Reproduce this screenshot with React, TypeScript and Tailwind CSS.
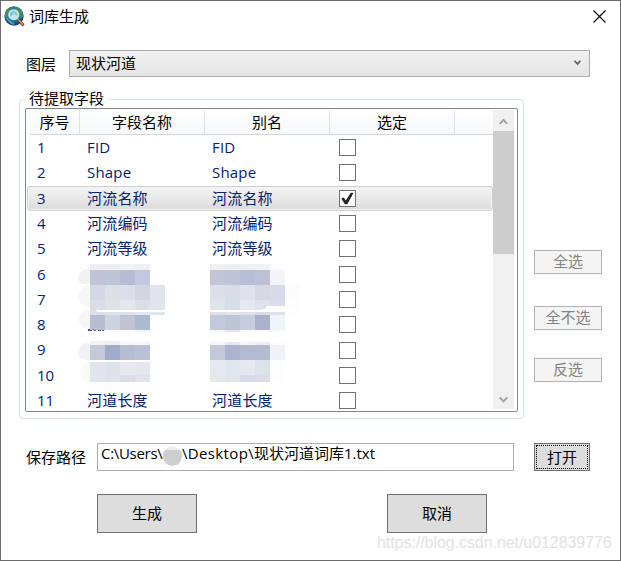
import React from 'react';

type Row = { id: number; name: string; alias: string; checked?: boolean };

const rows: Row[] = [
  { id: 1, name: 'FID', alias: 'FID' },
  { id: 2, name: 'Shape', alias: 'Shape' },
  { id: 3, name: '河流名称', alias: '河流名称', checked: true },
  { id: 4, name: '河流编码', alias: '河流编码' },
  { id: 5, name: '河流等级', alias: '河流等级' },
  { id: 6, name: '', alias: '' },
  { id: 7, name: '', alias: '' },
  { id: 8, name: '', alias: '' },
  { id: 9, name: '', alias: '' },
  { id: 10, name: '', alias: '' },
  { id: 11, name: '河道长度', alias: '河道长度' },
];

// Each band: top, height, then one colour per 15px block.
type Band = [number, number, string[]];

const nameBands: Band[] = [
  [0, 6, ['#eeeef3', '#ebedf3', '#f2f1f4', '#eff0f6']],
  [6, 15, ['#c2c3d6', '#bfc4d8', '#b9bdd3', '#c3c8de']],
  [21, 15, ['#d5d8e4', '#dddfe8', '#dcdfe9', '#d3d5e1', '#e0e4ed']],
  [36, 10, ['#d8dde7', '#dfe1e7', '#e4e6ee', '#dbdee6', '#e0e4ed']],
  [48, 3, ['#dce1e7', '#dfe2e8', '#dde0e9', '#e0e5ee', '#e0e4ed']],
  [51, 15, ['#b8bed1', '#ced3e2', '#c1c3d5', '#abb9d1']],
  [66, 2, ['#ffffff', '#fbfbfd', '#fcfcfd', '#f5f6f8']],
  [77, 4, ['#f3f3f6', '#eeeff5', '#f7f7f9', '#f7f8f9']],
  [81, 15, ['#c4c9d8', '#a2abc9', '#b7bdd0', '#b9c2d5']],
  [98, 13, ['#e1e4ed', '#dde1e9', '#eae8ef', '#e4e7f0']],
  [111, 7, ['#e1e5ec', '#dfe2ea', '#dadde8', '#dfe1eb']],
];

const aliasBands: Band[] = [
  [0, 6, ['#efeff4', '#eceef3', '#eef0f4', '#f0f1f6', '#fcfcfe']],
  [6, 15, ['#c3c4d7', '#c0c4d9', '#b8bfd5', '#bdc1d7', '#f3f4fa']],
  [21, 15, ['#dcdee8', '#d9dde8', '#dfe2ec', '#d6d8e4', '#d7dbe7', '#fcfcfe']],
  [36, 10, ['#dfe3ea', '#d8ddea', '#e6e8f1', '#dfe2ea', '#d9dde9', '#fdfdfe']],
  [48, 3, ['#dde0e5', '#e0e3e9', '#dfe2ea', '#d9dbe5', '#dce1e9', '#fdfdfe']],
  [51, 15, ['#c2c9db', '#bdc4d6', '#c7cddf', '#abb1cc', '#eef4fa']],
  [66, 2, ['#f6f7f9', '#e4e7f0', '#fafafc', '#fcfcfd', '#fafafc']],
  [78, 3, ['#f4f5f8', '#e7e9f2', '#f5f5f8', '#eceef4', '#fcfcfd']],
  [81, 15, ['#c5c8d8', '#adb4d0', '#b1bacf', '#b2bbd0', '#f1f2f9']],
  [96, 15, ['#e7e8ef', '#e0e6ee', '#e7e7f2', '#dde1ea', '#fdfdfe']],
  [111, 7, ['#e5e7ec', '#dfe3ea', '#d7daea', '#dadde8', '#fdfdfe']],
];

function Mosaic({ bands, blobs }: { bands: Band[]; blobs?: boolean }) {
  return (
    <svg width="104" height="121" viewBox="-12 0 104 121" shapeRendering="crispEdges" aria-hidden="true">
      {blobs && (
        <g shapeRendering="auto">
          <path d="M0 5H-4Q-12 8-12 14T-4 20H0Z" fill="#f2f2f5" />
          <path d="M0 21H-3Q-12 26-12 33T-2 43L0 44Z" fill="#f7f7f8" />
          <path d="M0 46H-5Q-11 50-11 56T-2 66H0Z" fill="#f5f5f7" />
          <path d="M0 79H-5Q-12 83-12 89T-3 96H0Z" fill="#f0f0f5" />
          <path d="M0 98H-3Q-10 103-10 110T0 120H8V118H0Z" fill="#f9f9fa" />
        </g>
      )}
      {bands.map(([y, h, colors]) =>
        colors.map((c, i) => <rect key={`${y}-${i}`} x={i * 15} y={y} width="15" height={h} fill={c} />),
      )}
      {blobs && <path d="M0 46h5l2 2H0z" fill="#dce1e7" />}
      {blobs && <path d="M-2 65.5h2M3 65.5h1M-2 66.5h4M4 66.5h2M8 66.5h3M12 66.5h2" stroke="#45548d" />}
      {!blobs && <path d="M57 42h18v5H52v-2h3z" fill="#fff" />}
    </svg>
  );
}

function GlobeIcon() {
  return (
    <svg width="21" height="21" viewBox="0 0 21 21" aria-hidden="true">
      <defs>
        <radialGradient id="globe" cx="45%" cy="40%" r="60%">
          <stop offset="0" stopColor="#45b5dc" />
          <stop offset=".65" stopColor="#176c9e" />
          <stop offset="1" stopColor="#123a5c" />
        </radialGradient>
      </defs>
      <circle cx="10" cy="10" r="9.7" fill="url(#globe)" />
      <path d="M1 6Q4 1 8 1L7 4 4 6 5 9 3 12 1 11ZM11 1q5 0 7 5l1 5-3 1-2-4-3-3ZM5 15l4 1 1 3-3-1Z" fill="#418f62" />
      <path d="M3 12Q5 16 10 18" stroke="#4ab7df" strokeWidth="1.2" fill="none" />
      <circle cx="9.7" cy="8.7" r="4.8" fill="#bde8f4" stroke="#d5e2e6" strokeWidth="1.4" />
      <path d="M6 8q1-3 4-3l2 1-3 2-2 3Z" fill="#7cc5df" />
      <path d="M10 6l3 1 .5 3-2-1Z" fill="#8dca8c" />
      <path d="M13 12.5l2 2" stroke="#e6eaec" strokeWidth="1.8" />
      <path d="M14.6 14.1l4.2 4.4" stroke="#713f2a" strokeWidth="3" strokeLinecap="round" />
      <path d="M14.8 14l3.9 4.2" stroke="#d98a59" strokeWidth="1.6" strokeLinecap="round" />
    </svg>
  );
}

function CheckBox({ checked }: { checked?: boolean }) {
  return (
    <span className="flex h-[17px] w-[17px] items-center justify-center border border-[#707070] bg-white">
      {checked && (
        <svg width="15" height="15" viewBox="0 0 15 15" aria-hidden="true">
          <path d="M1.3 7.4 3.8 6.5 5.8 9.4 10.8 1.8 13.4 2 7.3 13.2H4.9Z" fill="#212121" />
        </svg>
      )}
    </span>
  );
}

function SideButton({ label, className }: { label: string; className: string }) {
  return (
    <button
      className={`flex h-[24px] w-[68px] items-center justify-center border border-[#adb2b5] bg-[#f4f4f4] pb-[2px] text-[#838383] ${className}`}
    >
      {label}
    </button>
  );
}

export default function App() {
  return (
    <main className="relative flex h-[561px] w-[621px] flex-col overflow-hidden border border-[#6b6b6b] bg-white font-['Open_Sans','Noto_Sans_CJK_SC',sans-serif] text-[15px] leading-[20px] text-black">
      <header className="flex h-[30px] shrink-0 items-center pr-[14px] pl-[3px]">
        <GlobeIcon />
        <h1 className="ml-[4px]">词库生成</h1>
        <button className="ml-auto" aria-label="关闭">
          <svg width="13" height="13" viewBox="0 0 13 13" className="block">
            <path d="M.5.5l12 12M12.5.5l-12 12" stroke="#000" strokeWidth="1.1" />
          </svg>
        </button>
      </header>

      <section className="mt-[19px] flex h-[27px] shrink-0 items-center pl-[25px]">
        <span className="w-[43px]">图层</span>
        <div className="flex h-[27px] w-[521px] items-center justify-between border border-[#acacac] bg-linear-to-b from-[#f0f0f0] to-[#e5e5e5] pr-[8px] pl-[6px]">
          <span className="mb-[2px]">现状河道</span>
          <svg width="7" height="6" viewBox="0 0 7 6" className="mb-px">
            <path d="M.6.8 3.5 4 6.4.8" fill="none" stroke="#606060" strokeWidth="1.7" />
          </svg>
        </div>
      </section>

      <section className="mt-[22px] flex h-[320px] shrink-0 pl-[18px]">
        <fieldset className="relative h-[320px] w-[505px] rounded-[4px] border border-[#d5dfe5] pt-[8px] pl-[5px]">
          <span className="absolute -top-[12px] left-[6px] bg-white pr-[5px] pl-[3px]">待提取字段</span>
          <div className="relative flex h-[304px] w-[493px] rounded-[2px] border border-[#828790] pt-px pl-px">
            <div className="flex h-[301px] w-[466px] flex-col overflow-hidden">
              <div className="ml-[3px] flex h-[25px] shrink-0 border-b border-[#d5d5d5] bg-linear-to-b from-white to-[#f6f8fa] pr-px text-center leading-[25px]">
                <span className="w-[50px] border-r border-[#dfe1e4]">序号</span>
                <span className="w-[125px] border-r border-[#dfe1e4]">字段名称</span>
                <span className="w-[125px] border-r border-[#dfe1e4]">别名</span>
                <span className="w-[125px] border-r border-[#dfe1e4]">选定</span>
              </div>
              {rows.map((r) => (
                <div
                  key={r.id}
                  className={`flex h-[25.3px] shrink-0 items-center rounded-[3px] border pl-[9px] text-[#042271] ${
                    r.checked
                      ? 'border-[#cfcfcf] bg-linear-to-b from-[#f4f4f4] from-0% via-[#e9e9e9] via-50% to-[#dadada] to-100% shadow-[inset_0_0_0_1px_#f3f3f3]'
                      : 'border-transparent'
                  }`}
                >
                  <span className="mb-[1.2px] w-[50px]">{r.id}</span>
                  <span className="mb-[1.2px] w-[125px] tracking-[0.2px]">{r.name}</span>
                  <span className="mb-[1.2px] w-[127px] tracking-[0.2px]">{r.alias}</span>
                  <CheckBox checked={r.checked} />
                </div>
              ))}
            </div>
            <div className="flex h-[299px] w-[21px] flex-col items-center bg-[#f0f0f0]">
              <svg width="21" height="21" viewBox="0 0 21 21" className="shrink-0">
                <path d="m6.8 13.8 3.7-4 3.7 4" fill="none" stroke="#a0a0a0" strokeWidth="1.8" />
              </svg>
              <div className="h-[123px] w-full bg-[#cdcdcd]" />
              <svg width="21" height="21" viewBox="0 0 21 21" className="mt-auto shrink-0">
                <path d="m6.8 9.3 3.7 4 3.7-4" fill="none" stroke="#a0a0a0" strokeWidth="1.8" />
              </svg>
            </div>
            <div className="absolute top-[155px] left-[52px]">
              <Mosaic bands={nameBands} blobs />
            </div>
            <div className="absolute top-[155px] left-[172px]">
              <Mosaic bands={aliasBands} />
            </div>
          </div>
        </fieldset>
        <div className="ml-[10px] flex flex-col pt-[151px]">
          <SideButton label="全选" className="" />
          <SideButton label="全不选" className="mt-[32px]" />
          <SideButton label="反选" className="mt-[28px]" />
        </div>
      </section>

      <section className="mt-[24px] flex h-[28px] shrink-0 items-center pl-[25px]">
        <span className="w-[71px]">保存路径</span>
        <div className="flex h-[28px] w-[417px] items-start border border-[#abadb3] pl-[3px]">
          <span className="-mt-px w-[62px] tracking-[-0.3px]">C:\Users\</span>
          <span className="mt-[2px] h-[20px] w-[19px] shrink-0 rounded-full bg-linear-to-b from-[#ededed] from-20% to-[#cecece] to-20%" />
          <span className="-mt-px w-[72px] tracking-[0.35px]">\Desktop\</span>
          <span className="-mt-px">现状河道词库1.txt</span>
        </div>
        <button className="ml-[20px] h-[28px] w-[56px] border border-[#707070] bg-[#dddddd] p-px">
          <span className="flex h-full items-center justify-center border border-dotted border-black pb-px">打开</span>
        </button>
      </section>

      <section className="mt-[23px] flex h-[39px] shrink-0 pl-[96px]">
        <button className="w-[100px] border border-[#707070] bg-[#dddddd] pb-px">生成</button>
        <button className="ml-[190px] w-[100px] border border-[#707070] bg-[#dddddd] pb-px">取消</button>
      </section>

      <div className="absolute top-[532px] left-[376px] font-['Liberation_Sans',Arial,sans-serif] text-[16px] tracking-[-0.06px] whitespace-nowrap text-[#e2e2e2]">
        https://blog.csdn.net/u012839776
      </div>
    </main>
  );
}
